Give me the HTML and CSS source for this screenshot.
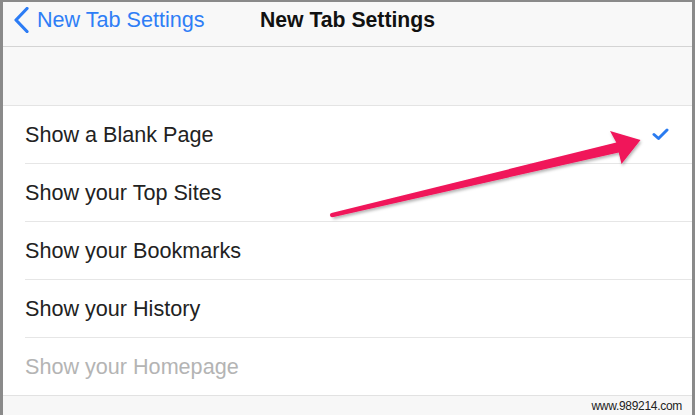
FILE: index.html
```html
<!DOCTYPE html>
<html lang="en">
<head>
  <meta charset="UTF-8">
  <title>New Tab Settings</title>
  <link rel="stylesheet" href="styles.css">
</head>
<body>

  <div class="frame">
    <div class="navbar">
      <a class="back" href="#">
        <svg class="chevron" width="16" height="26" viewBox="0 0 16 26">
          <path d="M13 1.5 L2 13 L13 24.5" fill="none" stroke="#2c7cf5" stroke-width="3.2" stroke-linecap="round" stroke-linejoin="round"/>
        </svg>
        <span>New Tab Settings</span>
      </a>
      <div class="title">New Tab Settings</div>
    </div>

    <div class="section-gap"></div>

    <ul class="list">
      <li class="row">
        <span>Show a Blank Page</span>
        <svg class="check" width="17" height="13" viewBox="0 0 17 13">
          <path d="M2 6.5 L6.5 10.5 L15 2" fill="none" stroke="#2a7bf0" stroke-width="3" stroke-linecap="round" stroke-linejoin="round"/>
        </svg>
      </li>
      <li class="row"><span>Show your Top Sites</span></li>
      <li class="row"><span>Show your Bookmarks</span></li>
      <li class="row"><span>Show your History</span></li>
      <li class="row last disabled"><span>Show your Homepage</span></li>
    </ul>

    <div class="footer">www.989214.com</div>

    <!-- annotation arrow pointing at the checkmark -->
    <svg class="arrow" width="695" height="415" viewBox="0 0 695 415">
      <defs>
        <filter id="shadow" x="-10%" y="-10%" width="120%" height="130%">
          <feDropShadow dx="1" dy="2" stdDeviation="1.5" flood-color="#000" flood-opacity="0.3"/>
        </filter>
      </defs>
      <polygon filter="url(#shadow)" fill="#f0145a"
        points="331.5,213 616.3,142.6 610,131 640.5,140 621.5,164 618.7,152.4 332.5,217.2"/>
      <circle cx="332" cy="215.1" r="2.1" fill="#f0145a"/>
    </svg>
  </div>

</body>
</html>
```

FILE: styles.css
```css
* {
  box-sizing: border-box;
}

body {
  margin: 0;
  font-family: "Liberation Sans", Arial, sans-serif;
  background: #fff;
}

.frame {
  position: relative;
  width: 695px;
  height: 415px;
  border-top: 2px solid #8a8a8a;
  border-left: 3px solid #8a8a8a;
  border-right: 3px solid #8a8a8a;
  overflow: hidden;
  display: flex;
  flex-direction: column;
}

.navbar {
  position: relative;
  height: 45px;
  padding: 0 0 9px 11px;
  background: #f8f8f8;
  border-bottom: 1px solid #d4d4d4;
  display: flex;
  align-items: center;
}

.back {
  display: flex;
  align-items: center;
  gap: 7px;
  color: #2f7ef6;
  text-decoration: none;
  font-size: 21.6px;
}

.title {
  position: absolute;
  left: 0;
  right: 0;
  top: 0;
  height: 36px;
  line-height: 36px;
  text-align: center;
  font-size: 21.2px;
  font-weight: bold;
  color: #111;
  pointer-events: none;
}

.section-gap {
  height: 59px;
  background: #f8f8f8;
  border-bottom: 1px solid #e4e4e4;
}

.list {
  list-style: none;
  margin: 0;
  padding: 0 0 0 22px;
  background: #fff;
}

.row {
  height: 58px;
  padding-right: 23px;
  border-bottom: 1px solid #e6e6e6;
  display: flex;
  align-items: center;
  justify-content: space-between;
  font-size: 21.6px;
  color: #222;
}

.row.last {
  margin-left: -22px;
  padding-left: 22px;
  border-bottom-color: #e2e2e2;
}

.disabled {
  color: #b4b4b4;
}

.footer {
  flex: 1;
  background: #f7f7f7;
  text-align: right;
  padding: 3px 10px 0 0;
  font-size: 12px;
  letter-spacing: -0.3px;
  color: #222;
}

.arrow {
  position: absolute;
  top: -2px;
  left: -3px;
  pointer-events: none;
}
```
